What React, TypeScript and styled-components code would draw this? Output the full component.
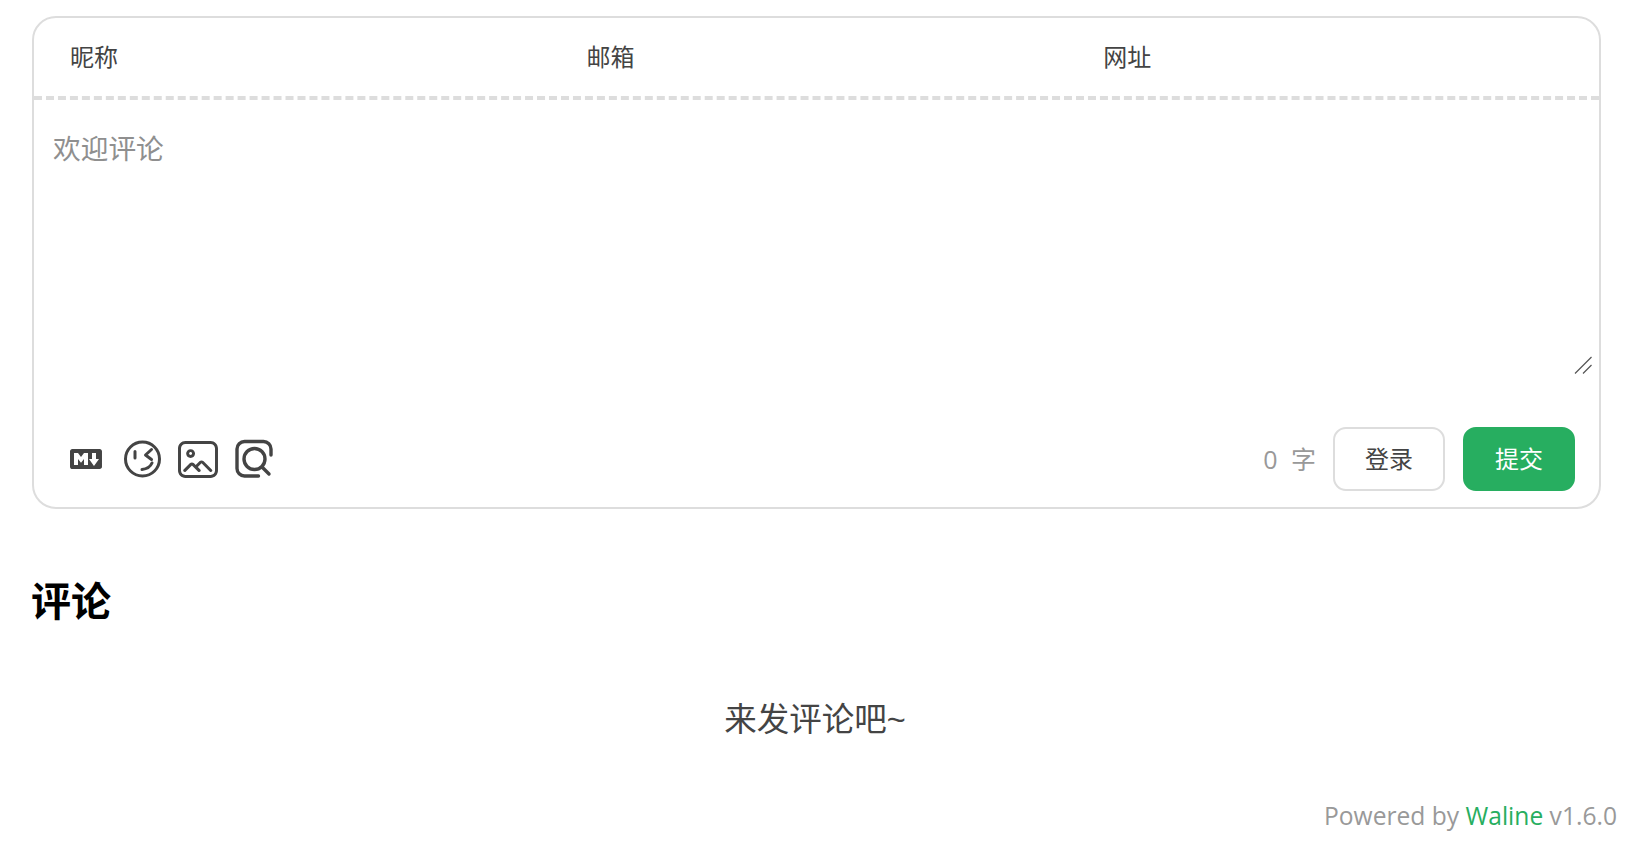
import React from "react";
import styled, { createGlobalStyle } from "styled-components";

const Global = createGlobalStyle`
  html, body { margin: 0; padding: 0; background: #fff; }
  body { font-family: "Open Sans", "Noto Sans CJK SC", sans-serif; color: #444; }
`;
const Page = styled.div`
  width: 1640px;
  height: 846px;
  box-sizing: border-box;
  padding: 16px 39px 0 32px;
  overflow: hidden;
`;
const Card = styled.form`
  box-sizing: border-box;
  width: 1569px;
  height: 493px;
  border: 2px solid #ddd;
  border-radius: 24px;
  display: flex;
  flex-direction: column;
`;
const Header = styled.div`
  display: grid;
  grid-template-columns: repeat(3, 516.6px);
  height: 78px;
  padding-left: 36px;
  border-bottom: 4px dashed #ddd;
`;
const Field = styled.input`
  border: 0;
  outline: 0;
  padding: 0 0 4px;
  min-width: 0;
  background: transparent;
  font: 24px "Noto Sans CJK SC", sans-serif;
  color: #444;
  &::placeholder { color: #444; opacity: 1; }
`;
const EditorBox = styled.div`
  position: relative;
  flex: none;
  height: 270px;
  margin: 6px 6px 0 6px;
`;
const Editor = styled.textarea`
  display: block;
  box-sizing: border-box;
  width: 100%;
  height: 100%;
  padding: 20px 13px;
  border: 0;
  outline: 0;
  resize: none;
  font: 27.7px/1.75 "Liberation Serif", "Noto Sans CJK SC", serif;
  color: #444;
  &::placeholder { color: #8f8f8f; opacity: 1; }
`;
const Grip = styled.svg`
  position: absolute;
  right: 1px;
  bottom: 2px;
  width: 18px;
  height: 18px;
  pointer-events: none;
`;
const Toolbar = styled.div`
  display: flex;
  align-items: center;
  justify-content: space-between;
  margin-top: 51px;
  padding: 0 24px 0 32px;
`;
const Actions = styled.div`
  display: flex;
`;
const Action = styled.span`
  width: 40px;
  height: 40px;
  margin-right: 16px;
  display: flex;
  align-items: center;
  justify-content: center;
  color: #444;
  svg { display: block; fill: currentColor; }
`;
const Info = styled.div`
  display: flex;
  align-items: center;
`;
const Count = styled.span`
  font: 25px "Open Sans", "Noto Sans CJK SC", sans-serif;
  color: #999;
  margin-right: 17px;
  padding-bottom: 2px;
  word-spacing: 7px;
`;
const Button = styled.button<{ $primary?: boolean }>`
  box-sizing: border-box;
  width: 112px;
  height: 64px;
  margin-left: ${(p) => (p.$primary ? "18px" : "0")};
  border: 2px solid ${(p) => (p.$primary ? "#27ae60" : "#ddd")};
  border-radius: 13px;
  background: ${(p) => (p.$primary ? "#27ae60" : "#fff")};
  color: ${(p) => (p.$primary ? "#fff" : "#444")};
  font: 24px "Noto Sans CJK SC", sans-serif;
  padding: 0 0 3px;
`;
const Title = styled.h3`
  margin: 64px 0 0 -1px;
  font: bold 40px/52px "Noto Sans CJK SC", sans-serif;
  color: #000;
`;
const Empty = styled.div`
  margin-top: 71px;
  text-align: center;
  font: 32.5px/48px "Liberation Sans", "Noto Sans CJK SC", sans-serif;
  color: #444;
  padding-right: 3px;
`;
const Footer = styled.div`
  margin-top: 53px;
  margin-right: -16px;
  text-align: right;
  font: 24.6px/38px "Open Sans", sans-serif;
  color: #999;
`;
const BrandLink = styled.a`
  color: #27ae60;
  text-decoration: none;
`;

export default function App() {
  return (
    <Page>
      <Global />
      <Card>
        <Header>
          <Field placeholder="昵称" />
          <Field placeholder="邮箱" />
          <Field placeholder="网址" />
        </Header>
        <EditorBox>
          <Editor placeholder="欢迎评论" />
          <Grip viewBox="0 0 18 18">
            <path d="M1 17.5L17.5 1M9 17.5L17.5 9" stroke="#555" strokeWidth="1.2" fill="none" />
          </Grip>
        </EditorBox>
        <Toolbar>
          <Actions>
            <Action>
              <svg width="32" height="32" viewBox="0 0 16 16">
                <path fillRule="evenodd" d="M14.85 3H1.15C.52 3 0 3.52 0 4.15v7.69C0 12.48.52 13 1.15 13h13.69c.64 0 1.15-.52 1.15-1.15v-7.7C16 3.52 15.48 3 14.85 3zM9 11H7V8L5.5 9.92 4 8v3H2V5h2l1.5 2L7 5h2v6zm2.99.5L9.5 8H11V5h2v3h1.5l-2.51 3.5z" />
              </svg>
            </Action>
            <Action>
              <svg width="40" height="40" viewBox="0 0 40 40">
                <g fill="none" stroke="currentColor" strokeWidth="3" strokeLinecap="round" strokeLinejoin="round">
                  <circle cx="20.5" cy="20" r="17" />
                  <path d="M13 12.5v6.5M29.5 10.5L23.5 16l6 4.5M30 24C28.5 27.5 25 30 20 30.5" />
                </g>
              </svg>
            </Action>
            <Action>
              <svg width="40" height="37" viewBox="80 112 864 800">
                <path d="M784 112H240c-88 0-160 72-160 160v480c0 88 72 160 160 160h544c88 0 160-72 160-160V272c0-88-72-160-160-160zm96 640c0 52.8-43.2 96-96 96H240c-52.8 0-96-43.2-96-96V272c0-52.8 43.2-96 96-96h544c52.8 0 96 43.2 96 96v480z" />
                <path d="M352 480c52.8 0 96-43.2 96-96s-43.2-96-96-96-96 43.2-96 96 43.2 96 96 96zm0-128c17.6 0 32 14.4 32 32s-14.4 32-32 32-32-14.4-32-32 14.4-32 32-32zm462.4 379.2-3.2-3.2-177.6-177.6c-25.6-25.6-65.6-25.6-91.2 0l-80 80-36.8-36.8c-25.6-25.6-65.6-25.6-91.2 0L200 728c-4.8 6.4-8 14.4-8 24 0 17.6 14.4 32 32 32 9.6 0 16-3.2 22.4-9.6L380.8 640l134.4 134.4c6.4 6.4 14.4 9.6 24 9.6 17.6 0 32-14.4 32-32 0-9.6-4.8-17.6-9.6-24l-52.8-52.8 80-80L769.6 776c6.4 4.8 12.8 8 20.8 8 17.6 0 32-14.4 32-32 0-8-3.2-16-8-20.8z" />
              </svg>
            </Action>
            <Action>
              <svg width="40" height="40" viewBox="0 0 40 40">
                <g fill="none" stroke="currentColor" strokeWidth="3.4" strokeLinecap="round" strokeLinejoin="round">
                  <path d="M24.5 37H10.5A7.5 7.5 0 0 1 3 29.5V10A7.5 7.5 0 0 1 10.5 2.5h19A7.5 7.5 0 0 1 37 10v6" />
                  <circle cx="20.5" cy="20" r="10.5" />
                  <path d="M28 28l7 7" />
                </g>
              </svg>
            </Action>
          </Actions>
          <Info>
            <Count>0 字</Count>
            <Button type="button">登录</Button>
            <Button type="button" $primary>提交</Button>
          </Info>
        </Toolbar>
      </Card>
      <Title>评论</Title>
      <Empty>来发评论吧~</Empty>
      <Footer>
        Powered by <BrandLink href="#">Waline</BrandLink> v1.6.0
      </Footer>
    </Page>
  );
}
